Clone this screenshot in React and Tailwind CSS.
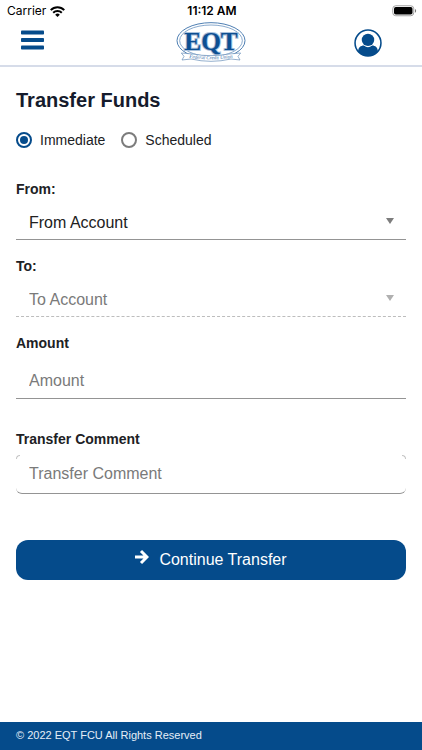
import { useState } from 'react';

const transferTypes = ['Immediate', 'Scheduled'];

const StatusBar = () => (
  <div className="grid h-[22px] grid-cols-3 items-center pl-[7px] pr-[5px] font-['Inter',sans-serif] text-black">
    <div className="flex items-center gap-1">
      <span className="text-xs">Carrier</span>
      <svg viewBox="0 0 30 22" className="h-[11px] w-[15px]" aria-hidden="true">
        <g fill="none" stroke="#000" strokeWidth="4">
          <path d="M1.5 8.2a19 19 0 0 1 27 0" />
          <path d="M6.4 13.6a12.2 12.2 0 0 1 17.2 0" />
        </g>
        <path d="M15 22l-4.600-4.600a6.500 6.500 0 0 1 9.200 0z" />
      </svg>
    </div>
    <span className="whitespace-nowrap text-center text-xs font-semibold">11:12 AM</span>
    <svg viewBox="0 0 50 24" className="h-3 w-[25px] justify-self-end" aria-label="Battery full">
      <rect x="1.5" y="1.5" width="42" height="20" rx="6" fill="#fff" stroke="#a3a3a3" strokeWidth="2" />
      <rect x="4" y="4" width="37" height="15" rx="3.5" />
      <path d="M46 8v7.500c3-1.200 3-6.300 0-7.500z" fill="#777" />
    </svg>
  </div>
);

const Logo = () => (
  <svg viewBox="0 0 210 120" className="h-10 w-[70px]" role="img" aria-label="EQT Federal Credit Union">
    <g fill="none" stroke="#4f7fb3">
      <ellipse cx="105" cy="56" rx="102" ry="54" strokeWidth="3" />
      <ellipse cx="105" cy="56" rx="94" ry="47" strokeWidth="2" />
    </g>
    <path
      d="M16 93l34 3q55 10 110 0l34-3-8 10 6 11-27-3q-60 14-120 0l-27 3 6-11z"
      fill="#fff"
      stroke="#5f88b5"
      strokeWidth="2"
    />
    <g
      className="font-['Liberation_Serif',serif] text-[76px] font-bold"
      fill="#0d4f92"
      stroke="#a9c1dc"
      strokeWidth="6"
      paintOrder="stroke"
    >
      <text x="105" y="83" textAnchor="middle">EQT</text>
    </g>
    <path id="ribbon" d="M32 106q73 12 146 0" fill="none" />
    <text className="font-['Liberation_Serif',serif] text-[15px] italic" fill="#2c639f">
      <textPath href="#ribbon" startOffset="50%" textAnchor="middle">Federal Credit Union</textPath>
    </text>
  </svg>
);

const Header = () => (
  <header className="grid h-[45px] grid-cols-3 items-center border-b-2 border-[#d6dce9] pl-5 pr-10">
    <button type="button" aria-label="Menu" className="-mt-2 justify-self-start text-[#054b8b]">
      <svg viewBox="0 0 24 20" className="h-5 w-6" fill="currentColor" aria-hidden="true">
        <rect x="1" y="0.500" width="23" height="4" rx="0.800" />
        <rect x="1" y="8" width="23" height="4" rx="0.800" />
        <rect x="1" y="15.500" width="23" height="4" rx="0.800" />
      </svg>
    </button>
    <div className="justify-self-center pb-1 pl-5">
      <Logo />
    </div>
    <button type="button" aria-label="Profile" className="justify-self-end pb-0.5 text-[#054b8b]">
      <svg viewBox="0 0 54 54" className="size-7" aria-hidden="true">
        <clipPath id="profile-clip">
          <circle cx="27" cy="27" r="25" />
        </clipPath>
        <circle cx="27" cy="27" r="25" fill="#fff" stroke="currentColor" strokeWidth="3" />
        <g fill="currentColor" clipPath="url(#profile-clip)">
          <path d="M8 54V43c0-7 5-11 11-11q8 6 16 0c6 0 11 4 11 11v11z" />
          <circle cx="27" cy="21" r="12" />
        </g>
      </svg>
    </button>
  </header>
);

const SelectField = ({ id, label, placeholder, disabled }) => (
  <div className="mb-4">
    <label htmlFor={id} className="block text-sm font-bold leading-5">{label}</label>
    <div className="relative mt-[7px]">
      <select
        id={id}
        disabled={disabled}
        className="block h-[34px] w-full appearance-none border-b border-[#949494] bg-transparent px-[13px] text-base text-[#212121] disabled:border-dashed disabled:border-[#bdbdbd] disabled:text-[#7a7a7a] disabled:opacity-100"
      >
        <option>{placeholder}</option>
      </select>
      <svg
        viewBox="0 0 8 6"
        className={`pointer-events-none absolute right-3 top-3 h-1.5 w-2 ${disabled ? 'fill-[#b0b0b0]' : 'fill-[#7d7d7d]'}`}
        aria-hidden="true"
      >
        <path d="M0 0h8L4 6z" />
      </svg>
    </div>
  </div>
);

const App = () => {
  const [transferType, setTransferType] = useState('Immediate');
  const [amount, setAmount] = useState('');
  const [comment, setComment] = useState('');

  return (
    <div className="flex min-h-screen flex-col bg-white font-['Liberation_Sans',Arial,sans-serif] text-[#202124]">
      <StatusBar />
      <Header />

      <main className="flex-1 px-4 pt-[19px]">
        <h1 className="text-xl font-bold leading-7 text-[#151b2c]">Transfer Funds</h1>

        <form onSubmit={(e) => e.preventDefault()}>
          <div className="mt-4 flex gap-4" role="radiogroup" aria-label="Transfer type">
            {transferTypes.map(type => (
              <label key={type} className="flex items-center gap-2 text-sm leading-5">
                <input
                  type="radio"
                  name="transferType"
                  value={type}
                  checked={transferType === type}
                  onChange={() => setTransferType(type)}
                  className="size-4 appearance-none rounded-full border-2 border-[#7c7c7c] bg-white checked:border-[#054b8b] checked:bg-[#054b8b] checked:bg-clip-content checked:p-0.5"
                />
                {type}
              </label>
            ))}
          </div>

          <div className="mt-[29px]">
            <SelectField id="from" label="From:" placeholder="From Account" />
            <SelectField id="to" label="To:" placeholder="To Account" disabled />
          </div>

          <label htmlFor="amount" className="block text-sm font-bold leading-5">Amount</label>
          <input
            id="amount"
            type="text"
            inputMode="decimal"
            placeholder="Amount"
            value={amount}
            onChange={(e) => setAmount(e.target.value)}
            className="mt-2.5 block h-9 w-full border-b border-[#949494] px-[13px] text-base placeholder:text-[#7a7a7a]"
          />

          <label htmlFor="comment" className="mt-[30px] block text-sm font-bold leading-5">Transfer Comment</label>
          <div className="relative mt-1.5">
            <input
              id="comment"
              type="text"
              placeholder="Transfer Comment"
              value={comment}
              onChange={(e) => setComment(e.target.value)}
              className="block h-[39px] w-full rounded-md border-b border-[#949494] px-[13px] text-base placeholder:text-[#7a7a7a]"
            />
            {/* faint top corners */}
            <span className="pointer-events-none absolute left-0 top-0 size-1 rounded-tl-md border-l border-t border-[#c4c4c4]" />
            <span className="pointer-events-none absolute right-0 top-0 size-1 rounded-tr-md border-r border-t border-[#c4c4c4]" />
          </div>

          <button
            type="submit"
            className="mt-[46px] flex h-10 w-full items-center justify-center gap-2.5 rounded-xl bg-[#054b8b] text-base text-white"
          >
            <svg viewBox="0 0 14 16" className="mb-1.5 h-4 w-3.5" fill="none" stroke="currentColor" strokeWidth="3" aria-hidden="true">
              <path d="M0 8h11M6 2l6 6-6 6" />
            </svg>
            Continue Transfer
          </button>
        </form>
      </main>

      <footer className="bg-[#054b8b] px-4 pb-[7px] pt-[5px] text-[11px] leading-4 text-[#e4eef8]">
        © 2022 EQT FCU All Rights Reserved
      </footer>
    </div>
  );
};

export default App;
